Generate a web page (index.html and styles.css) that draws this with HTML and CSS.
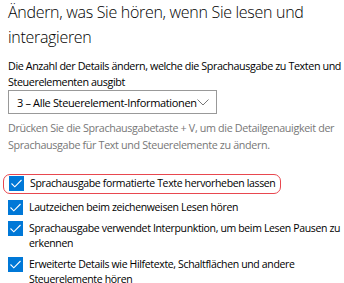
FILE: index.html
```html
<!DOCTYPE html>
<html lang="de">
  <head>
    <meta charset="UTF-8" />
    <meta name="viewport" content="width=device-width, initial-scale=1.0" />
    <title>Sprachausgabe</title>
    <link rel="stylesheet" href="styles.css">
  </head>
  <body>
    <div class="page">
      <h1>Ändern, was Sie hören, wenn Sie lesen und interagieren</h1>

      <p class="intro">
        Die Anzahl der Details ändern, welche die Sprachausgabe zu Texten und
        Steuerelementen ausgibt
      </p>

      <div class="select">
        <span>3 – Alle Steuerelement-Informationen</span>
        <svg class="chevron" width="12" height="7" viewBox="0 0 12 7">
          <path d="M0.5 0.5 L6 6 L11.5 0.5" fill="none" stroke="#777" stroke-width="1" />
        </svg>
      </div>

      <p class="hint">
        Drücken Sie die Sprachausgabetaste + V, um die Detailgenauigkeit der
        Sprachausgabe für Text und Steuerelemente zu ändern.
      </p>

      <ul class="checks">
        <li class="check marked">
          <span class="box">
            <svg width="15" height="15" viewBox="0 0 15 15">
              <path d="M2.5 7.5 L5.8 10.8 L12.5 4" fill="none" stroke="#fff" stroke-width="1.1" />
            </svg>
          </span>
          <span class="label">Sprachausgabe formatierte Texte hervorheben lassen</span>
        </li>
        <li class="check">
          <span class="box">
            <svg width="15" height="15" viewBox="0 0 15 15">
              <path d="M2.5 7.5 L5.8 10.8 L12.5 4" fill="none" stroke="#fff" stroke-width="1.1" />
            </svg>
          </span>
          <span class="label">Lautzeichen beim zeichenweisen Lesen hören</span>
        </li>
        <li class="check">
          <span class="box">
            <svg width="15" height="15" viewBox="0 0 15 15">
              <path d="M2.5 7.5 L5.8 10.8 L12.5 4" fill="none" stroke="#fff" stroke-width="1.1" />
            </svg>
          </span>
          <span class="label">Sprachausgabe verwendet Interpunktion, um beim Lesen Pausen zu erkennen</span>
        </li>
        <li class="check">
          <span class="box">
            <svg width="15" height="15" viewBox="0 0 15 15">
              <path d="M2.5 7.5 L5.8 10.8 L12.5 4" fill="none" stroke="#fff" stroke-width="1.1" />
            </svg>
          </span>
          <span class="label">Erweiterte Details wie Hilfetexte, Schaltflächen und andere Steuerelemente hören</span>
        </li>
      </ul>
    </div>
  </body>
</html>
```

FILE: styles.css
```css
body {
  margin: 0;
  padding: 0;
  background-color: #fff;
  color: #000;
  font-family: "Open Sans", "Noto Sans", sans-serif;
}

.page {
  padding: 0 0 0 8px;
}

h1 {
  margin: 0;
  font-size: 16px;
  font-weight: 300;
  line-height: 25px;
  letter-spacing: -0.3px;
}

.intro {
  margin: 8px 0 0;
  font-size: 10.75px;
  line-height: 16px;
  letter-spacing: -0.4px;
}

.select {
  display: flex;
  align-items: center;
  justify-content: space-between;
  box-sizing: border-box;
  width: 209px;
  height: 24px;
  padding: 0 7px 0 8px;
  border: 1px solid #999;
  font-size: 11px;
  letter-spacing: -0.35px;
  white-space: nowrap;
}

.hint {
  margin: 6px 0 0;
  padding-right: 6px;
  color: #777;
  font-size: 10.75px;
  line-height: 17px;
  letter-spacing: -0.35px;
}

.checks {
  list-style-type: none;
  margin: 20px 0 0;
  padding: 0;
}

.check {
  display: flex;
  align-items: flex-start;
  gap: 6px;
  margin: 0 0 6px;
  font-size: 10.5px;
  line-height: 15px;
  letter-spacing: -0.35px;
}

.check .box {
  flex: none;
  width: 15px;
  height: 15px;
  background-color: #0078d7;
}

.check .box svg {
  display: block;
}

.check.marked {
  width: fit-content;
  margin-left: -5px;
  padding: 1px 5px 2px;
  border: 1px solid #e8474f;
  border-radius: 7px;
}
```
